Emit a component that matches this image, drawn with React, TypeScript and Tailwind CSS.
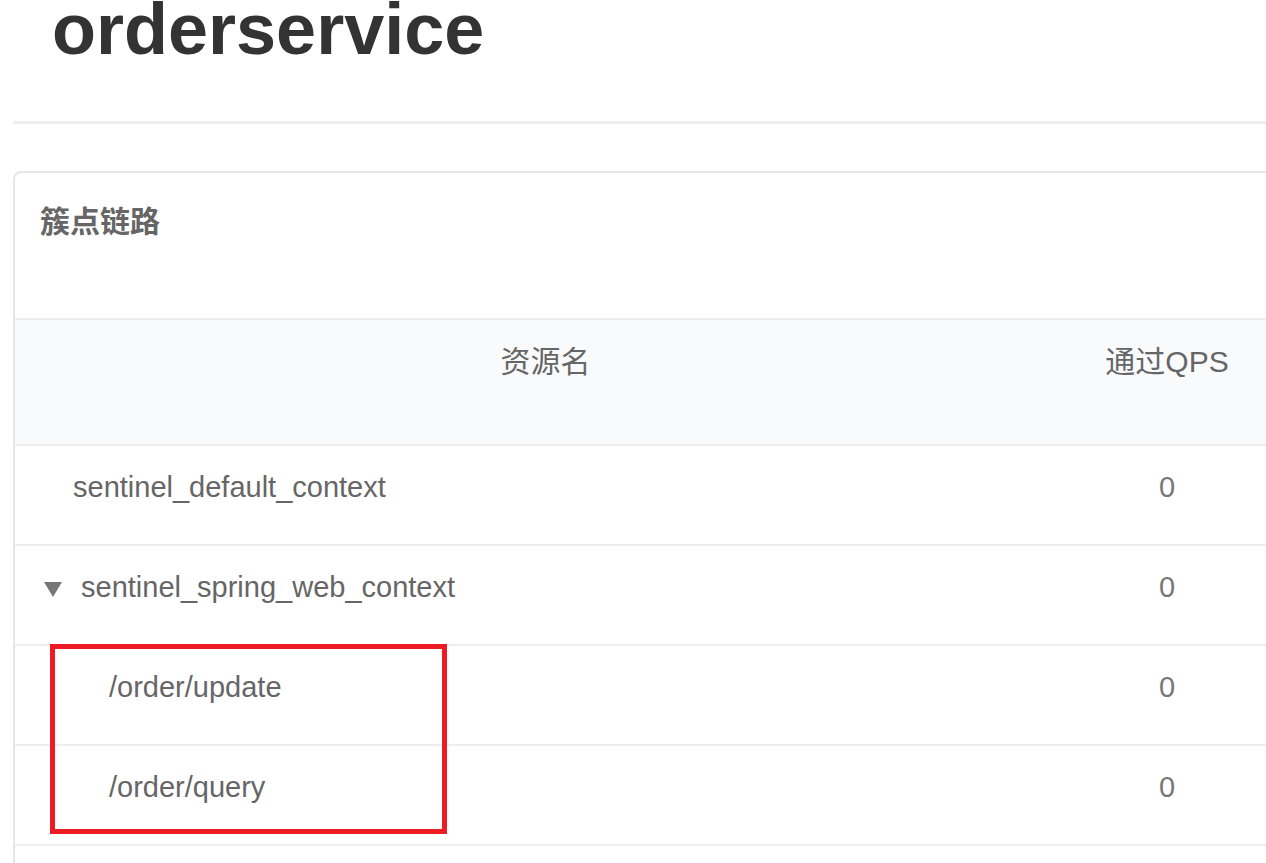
import { Fragment } from 'react'

interface ChainRow {
  name: string
  qps: number
  level: 0 | 1
  expandable?: boolean
}

const rows: ChainRow[] = [
  { name: 'sentinel_default_context', qps: 0, level: 0 },
  { name: 'sentinel_spring_web_context', qps: 0, level: 0, expandable: true },
  { name: '/order/update', qps: 0, level: 1 },
  { name: '/order/query', qps: 0, level: 1 },
]

const font = 'font-["Liberation_Sans","Noto_Sans_CJK_SC",sans-serif]'

function NameCell({ row }: { row: ChainRow }) {
  if (row.expandable) {
    return (
      <div className="flex items-center pl-[29px] pt-[24px] leading-[34px]">
        <svg width="18" height="15" viewBox="0 0 18 15" className="mt-[4px] mr-[19px] shrink-0">
          <polygon points="0,0 18,0 9,15" fill="#777777" />
        </svg>
        <span>{row.name}</span>
      </div>
    )
  }
  return (
    <div className={`pt-[24px] leading-[34px] ${row.level === 1 ? 'pl-[94px]' : 'pl-[58px]'}`}>
      {row.name}
    </div>
  )
}

export default function App() {
  return (
    <div className={`relative h-[863px] w-full overflow-hidden bg-white ${font}`}>
      {/* page title */}
      <h1 className="mt-[-7px] pl-[52px] text-[72px] font-bold leading-none text-[#333333]">
        orderservice
      </h1>

      <div className="ml-[13px] mt-[56px] h-[3px] bg-[#eeeeee]" />

      {/* card */}
      <div className="ml-[13px] mt-[47px] mr-[-40px] h-[800px] rounded-tl-lg border-2 border-[#e6e6e6]">
        <div className="h-[145px] pl-[25px] pt-[34px] text-[30px] font-bold leading-[30px] text-[#666666]">
          簇点链路
        </div>

        <div className="grid grid-cols-[1061px_182px_1fr] text-[29px] text-[#666666]">
          {/* table head */}
          <div className="h-[128px] border-y-2 border-[#eeeeee] bg-[#f9fafb] pt-[27px] text-center text-[30px] leading-[30px]">
            资源名
          </div>
          <div className="h-[128px] border-y-2 border-[#eeeeee] bg-[#f9fafb] pt-[27px] text-center text-[30px] leading-[30px]">
            通过QPS
          </div>
          <div className="h-[128px] border-y-2 border-[#eeeeee] bg-[#f9fafb]" />

          {rows.map((row) => (
            <Fragment key={row.name}>
              <div className="h-[100px] border-b-2 border-[#eeeeee]">
                <NameCell row={row} />
              </div>
              <div className="h-[100px] border-b-2 border-[#eeeeee] pt-[24px] text-center leading-[34px] text-[#777777]">
                {row.qps}
              </div>
              <div className="h-[100px] border-b-2 border-[#eeeeee]" />
            </Fragment>
          ))}
        </div>
      </div>

      {/* annotation box */}
      <div className="absolute left-[50px] top-[644px] h-[190px] w-[397px] border-[5px] border-[#ed1c24]" />
    </div>
  )
}
